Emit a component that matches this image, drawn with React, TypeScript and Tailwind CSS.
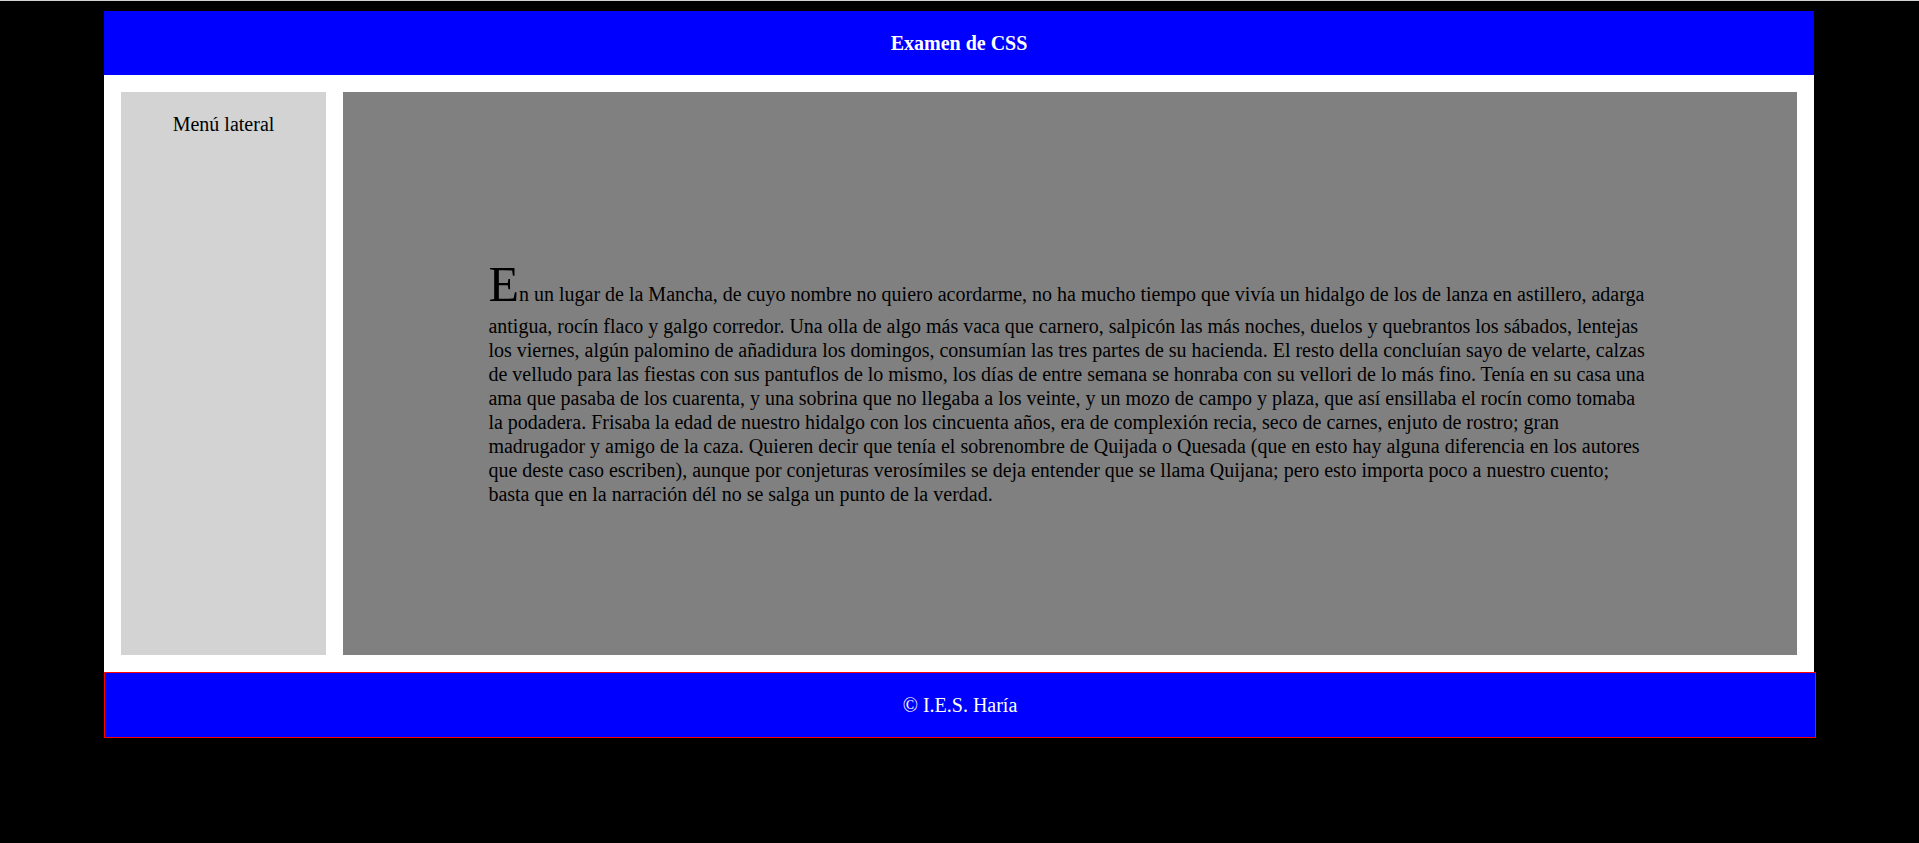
import React from "react";

const TEXT =
  "n un lugar de la Mancha, de cuyo nombre no quiero acordarme, no ha mucho tiempo que vivía un hidalgo de los de lanza en astillero, adarga antigua, rocín flaco y galgo corredor. Una olla de algo más vaca que carnero, salpicón las más noches, duelos y quebrantos los sábados, lentejas los viernes, algún palomino de añadidura los domingos, consumían las tres partes de su hacienda. El resto della concluían sayo de velarte, calzas de velludo para las fiestas con sus pantuflos de lo mismo, los días de entre semana se honraba con su vellori de lo más fino. Tenía en su casa una ama que pasaba de los cuarenta, y una sobrina que no llegaba a los veinte, y un mozo de campo y plaza, que así ensillaba el rocín como tomaba la podadera. Frisaba la edad de nuestro hidalgo con los cincuenta años, era de complexión recia, seco de carnes, enjuto de rostro; gran madrugador y amigo de la caza. Quieren decir que tenía el sobrenombre de Quijada o Quesada (que en esto hay alguna diferencia en los autores que deste caso escriben), aunque por conjeturas verosímiles se deja entender que se llama Quijana; pero esto importa poco a nuestro cuento; basta que en la narración dél no se salga un punto de la verdad.";

export default function App() {
  return (
    <div
      className="min-h-[843px] w-full bg-black text-[20px] leading-[normal] text-black"
      style={{ fontFamily: '"Liberation Serif", "Times New Roman", serif' }}
    >
      <div className="h-px w-full bg-[#d3d3d3]" />
      <div className="ml-[104px] w-[1710px] pt-[10px]">
        <header className="flex h-[64px] items-center justify-center bg-[#0000ff] font-bold text-white">
          Examen de CSS
        </header>
        <div className="flex h-[597px] gap-[17px] bg-white p-[17px]">
          <aside className="w-[205px] shrink-0 bg-[#d3d3d3] pt-[20px] text-center leading-[1.2]">
            Menú lateral
          </aside>
          <main className="flex flex-1 items-center bg-[#808080] pt-[12px]">
            <p className="mx-auto w-[80%] leading-[1.2]">
              <span className="text-[50px]">E</span>
              {TEXT}
            </p>
          </main>
        </div>
        <footer className="flex h-[66px] w-[1712px] items-center justify-center border border-[#ff0000] bg-[#0000ff] text-white">
          © I.E.S. Haría
        </footer>
      </div>
    </div>
  );
}
